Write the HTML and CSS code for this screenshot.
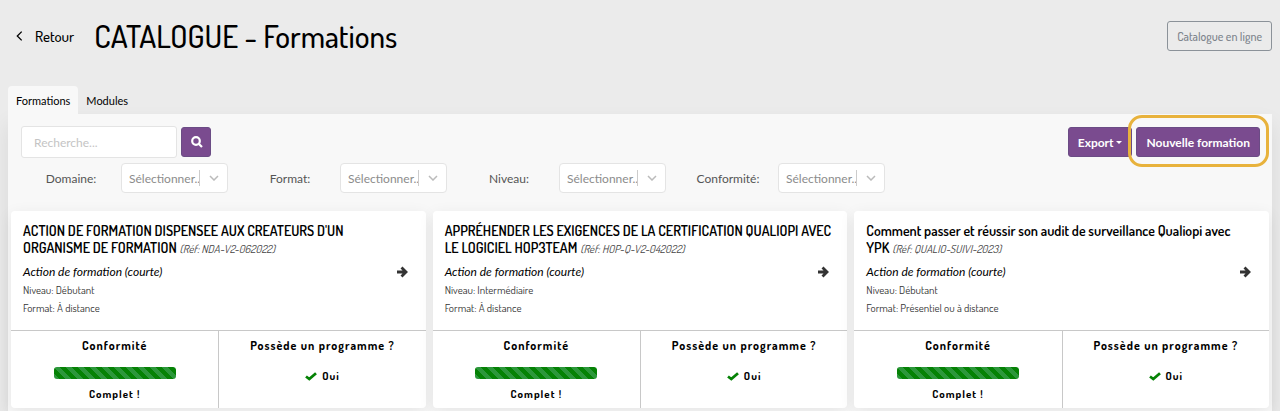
FILE: index.html
```html
<!DOCTYPE html>
<html lang="fr">
<head>
<meta charset="utf-8">
<meta name="viewport" content="width=device-width, initial-scale=1">
<title>Catalogue - Formations</title>
<link rel="stylesheet" href="styles.css">
</head>
<body>

<header class="page-header">
  <a href="#" class="back">
    <svg class="back-icon" viewBox="0 0 8 12"><path d="M6.5 1 L1.5 6 L6.5 11"/></svg>
    Retour
  </a>
  <h1>CATALOGUE - Formations</h1>
  <button type="button" class="btn-outline">Catalogue en ligne</button>
</header>

<nav class="tabs">
  <a href="#" class="tab active">Formations</a>
  <a href="#" class="tab">Modules</a>
</nav>

<main class="panel">
  <div class="toolbar">
    <form class="search">
      <input type="text" class="search-input" placeholder="Recherche..." aria-label="Recherche">
      <button type="button" class="btn btn-search" aria-label="Rechercher">
        <svg viewBox="0 0 12 12"><circle cx="5" cy="5" r="3.8"/><path d="M8 8 L11 11"/></svg>
      </button>
    </form>
    <div class="actions">
      <button type="button" class="btn">Export <span class="caret"></span></button>
      <div class="highlight">
        <button type="button" class="btn">Nouvelle formation</button>
      </div>
    </div>
  </div>

  <div class="filters">
    <div class="filter">
      <label for="domaine">Domaine:</label>
      <div class="select-box">
        <select id="domaine"><option>Sélectionner...</option></select>
        <svg viewBox="0 0 10 6"><path d="M1 1 L5 5 L9 1"/></svg>
      </div>
    </div>
    <div class="filter">
      <label for="format">Format:</label>
      <div class="select-box">
        <select id="format"><option>Sélectionner...</option></select>
        <svg viewBox="0 0 10 6"><path d="M1 1 L5 5 L9 1"/></svg>
      </div>
    </div>
    <div class="filter">
      <label for="niveau">Niveau:</label>
      <div class="select-box">
        <select id="niveau"><option>Sélectionner...</option></select>
        <svg viewBox="0 0 10 6"><path d="M1 1 L5 5 L9 1"/></svg>
      </div>
    </div>
    <div class="filter">
      <label for="conformite">Conformité:</label>
      <div class="select-box">
        <select id="conformite"><option>Sélectionner...</option></select>
        <svg viewBox="0 0 10 6"><path d="M1 1 L5 5 L9 1"/></svg>
      </div>
    </div>
  </div>

  <div class="cards">
    <article class="card">
      <div class="card-body">
        <h2>ACTION DE FORMATION DISPENSEE AUX CREATEURS D'UN<br>ORGANISME DE FORMATION <em class="ref">(Réf: NDA-V2-062022)</em></h2>
        <div class="type">
          <em>Action de formation (courte)</em>
          <a href="#" class="arrow" aria-label="Ouvrir"><svg viewBox="0 0 12 12"><path d="M1 6 H9.5 M5.5 1.5 L10 6 L5.5 10.5"/></svg></a>
        </div>
        <p>Niveau: Débutant</p>
        <p>Format: À distance</p>
      </div>
      <div class="card-footer">
        <div class="cell">
          <h3>Conformité</h3>
          <div class="progress"><div class="bar" style="width:100%"></div></div>
          <span class="status">Complet !</span>
        </div>
        <div class="cell">
          <h3>Possède un programme ?</h3>
          <span class="answer"><svg viewBox="0 0 12 9"><path d="M1 4.5 L4.3 7 L11 1.3"/></svg>Oui</span>
        </div>
      </div>
    </article>

    <article class="card">
      <div class="card-body">
        <h2>APPRÉHENDER LES EXIGENCES DE LA CERTIFICATION QUALIOPI AVEC<br>LE LOGICIEL HOP3TEAM <em class="ref">(Réf: HOP-Q-V2-042022)</em></h2>
        <div class="type">
          <em>Action de formation (courte)</em>
          <a href="#" class="arrow" aria-label="Ouvrir"><svg viewBox="0 0 12 12"><path d="M1 6 H9.5 M5.5 1.5 L10 6 L5.5 10.5"/></svg></a>
        </div>
        <p>Niveau: Intermédiaire</p>
        <p>Format: À distance</p>
      </div>
      <div class="card-footer">
        <div class="cell">
          <h3>Conformité</h3>
          <div class="progress"><div class="bar" style="width:100%"></div></div>
          <span class="status">Complet !</span>
        </div>
        <div class="cell">
          <h3>Possède un programme ?</h3>
          <span class="answer"><svg viewBox="0 0 12 9"><path d="M1 4.5 L4.3 7 L11 1.3"/></svg>Oui</span>
        </div>
      </div>
    </article>

    <article class="card">
      <div class="card-body">
        <h2>Comment passer et réussir son audit de surveillance Qualiopi avec<br>YPK <em class="ref">(Réf: QUALIO-SUIVI-2023)</em></h2>
        <div class="type">
          <em>Action de formation (courte)</em>
          <a href="#" class="arrow" aria-label="Ouvrir"><svg viewBox="0 0 12 12"><path d="M1 6 H9.5 M5.5 1.5 L10 6 L5.5 10.5"/></svg></a>
        </div>
        <p>Niveau: Débutant</p>
        <p>Format: Présentiel ou à distance</p>
      </div>
      <div class="card-footer">
        <div class="cell">
          <h3>Conformité</h3>
          <div class="progress"><div class="bar" style="width:100%"></div></div>
          <span class="status">Complet !</span>
        </div>
        <div class="cell">
          <h3>Possède un programme ?</h3>
          <span class="answer"><svg viewBox="0 0 12 9"><path d="M1 4.5 L4.3 7 L11 1.3"/></svg>Oui</span>
        </div>
      </div>
    </article>
  </div>
</main>

</body>
</html>
```
FILE: styles.css
```css
* {
  box-sizing: border-box;
}

body {
  margin: 0;
  padding: 0 8px;
  background: #ebebeb;
  color: #000;
  font-family: Dosis, "Liberation Sans Narrow", Lato, sans-serif;
  font-size: 12px;
}

svg {
  fill: none;
  stroke: currentColor;
}

h1, h2, h3, p {
  margin: 0;
}

a {
  color: inherit;
  text-decoration: none;
}

/* Header */
.page-header {
  display: flex;
  align-items: center;
  padding: 15px 0 15px 8px;
}

.back {
  display: flex;
  align-items: center;
  gap: 12px;
  font-size: 15px;
  font-weight: 500;
}

.back-icon {
  width: 7px;
  height: 12px;
  stroke-width: 1.5;
}

.page-header h1 {
  margin-left: 20px;
  font-size: 31px;
  line-height: 42px;
  font-weight: 500;
}

.btn-outline {
  margin-left: auto;
  height: 30px;
  padding: 0 9px;
  border: 1px solid #8b9299;
  border-radius: 3px;
  background: none;
  color: #7d848b;
  font-family: inherit;
  font-size: 12px;
  font-weight: 500;
}

/* Tabs */
.tabs {
  display: flex;
  margin-top: 14px;
  font-family: Lato, sans-serif;
}

.tab {
  padding: 1px 8px 0;
  border-radius: 4px 4px 0 0;
  font-size: 11px;
  line-height: 27px;
}

.tab.active {
  background: #f8f8f8;
}

.panel {
  padding: 12px 3px 3px;
  background: #f8f8f8;
  box-shadow: 0 10px 20px rgba(0, 0, 0, 0.08);
  font-family: Lato, sans-serif;
}

/* Search and buttons */
.toolbar,
.search,
.actions {
  display: flex;
  align-items: center;
}

.toolbar {
  justify-content: space-between;
  padding: 0 9px 0 10px;
}

.search {
  gap: 4px;
}

.search-input {
  width: 156px;
  height: 32px;
  padding: 0 12px;
  border: 1px solid #e4e4e4;
  border-radius: 3px;
  background: #fff;
  font-family: inherit;
  font-size: 12px;
}

.search-input::placeholder {
  color: #c4c4c4;
}

.btn {
  height: 30px;
  padding: 0 9px;
  border: 1px solid #6b4c85;
  border-radius: 3px;
  background: #7a4b8f;
  color: #fff;
  font-family: inherit;
  font-size: 12px;
  font-weight: bold;
}

.btn-search {
  width: 30px;
}

.btn-search svg {
  display: block;
  width: 12px;
  height: 12px;
  stroke-width: 2.2;
}

.caret {
  display: inline-block;
  border: 3px solid transparent;
  border-top-color: #fff;
  border-bottom: 0;
  vertical-align: 3px;
}

.actions {
  gap: 4px;
}

.highlight {
  position: relative;
}

/* Ring drawn round the main action */
.highlight::after {
  content: "";
  position: absolute;
  inset: -12px -9px -10px -8px;
  border: 3px solid #e8b23c;
  border-radius: 14px;
  pointer-events: none;
}

/* Filters */
.filters {
  display: flex;
  gap: 12px;
  padding: 5px 10px 18px;
}

.filter {
  display: flex;
  align-items: center;
}

.filter label {
  width: 100px;
  color: #555;
  font-size: 12px;
  text-align: center;
}

.select-box {
  display: flex;
  align-items: center;
  width: 107px;
  height: 30px;
  border: 1px solid #e4e4e4;
  border-radius: 4px;
  background: #fff;
  color: #bbb;
}

.select-box select {
  appearance: none;
  width: 78px;
  height: 16px;
  padding: 0 0 0 7px;
  border: 0;
  border-right: 1px solid #ccc;
  background: none;
  color: #8c8c8c;
  font-family: inherit;
  font-size: 12px;
}

.select-box svg {
  width: 10px;
  height: 6px;
  margin: 0 auto;
  stroke-width: 1.5;
}

/* Cards */
.cards {
  display: grid;
  grid-template-columns: repeat(3, minmax(0, 1fr));
  gap: 7px;
  font-family: Dosis, "Liberation Sans Narrow", Lato, sans-serif;
}

.card {
  border-radius: 4px;
  background: #fff;
  box-shadow: 0 4px 16px rgba(0, 0, 0, 0.08);
}

.card-body {
  height: 119px;
  padding: 11px 12px;
}

.card h2 {
  font-size: 14px;
  line-height: 17px;
  font-weight: 600;
  white-space: nowrap;
}

.ref {
  color: #444;
  font-size: 11px;
  font-weight: normal;
}

.type {
  display: flex;
  align-items: center;
  justify-content: space-between;
  padding: 5px 6px 0 0;
  font-family: Lato, sans-serif;
  font-size: 12px;
  line-height: 18px;
}

.arrow svg {
  display: block;
  width: 12px;
  height: 12px;
  color: #333;
  stroke-width: 2.8;
}

.card-body p {
  color: #333;
  font-size: 11px;
  line-height: 18px;
}

.card-footer {
  display: grid;
  grid-template-columns: 1fr 1fr;
  border-top: 1px solid #c8c8c8;
}

.cell {
  display: flex;
  flex-direction: column;
  align-items: center;
  height: 77px;
  letter-spacing: 1px;
}

.cell + .cell {
  border-left: 1px solid #c8c8c8;
}

.cell h3 {
  margin: 6px 0 12px;
  font-size: 12px;
  line-height: 18px;
  font-weight: bold;
}

.progress {
  width: 122px;
  height: 12px;
  border-radius: 3px;
  overflow: hidden;
}

.bar {
  height: 100%;
  background: linear-gradient(45deg, #2c973b 25%, #058205 25% 50%, #2c973b 50% 75%, #058205 75%);
  background-size: 12px 12px;
}

.status {
  margin-top: 6px;
  font-size: 11px;
  line-height: 18px;
  font-weight: bold;
}

.answer {
  display: flex;
  align-items: center;
  gap: 5px;
  font-size: 11px;
  line-height: 18px;
  font-weight: bold;
}

.answer svg {
  width: 12px;
  height: 9px;
  color: #058205;
  stroke-width: 2.8;
}
```
